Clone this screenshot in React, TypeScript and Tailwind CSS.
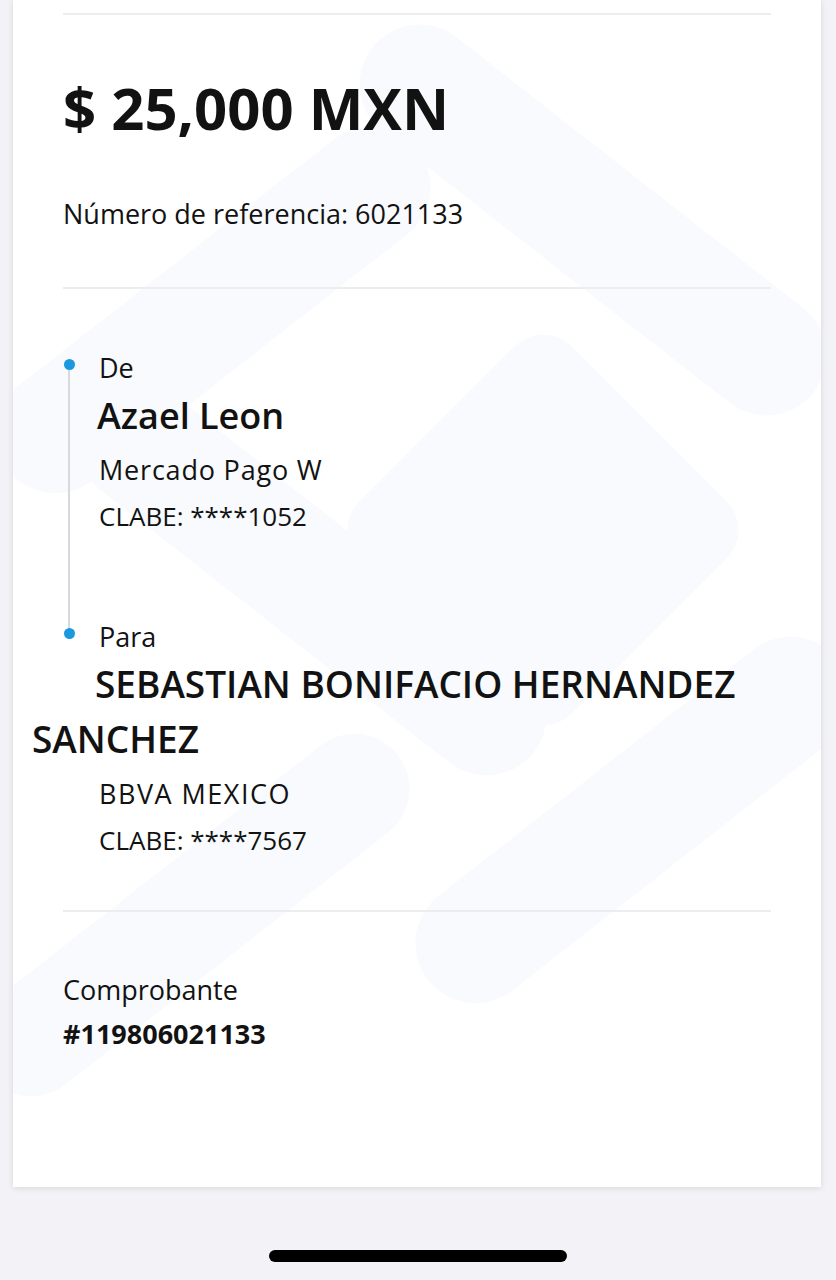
const font = { fontFamily: '"Open Sans", "Noto Sans", sans-serif' };

function Watermark() {
  // faint bank-logo pattern behind the receipt
  return (
    <svg
      className="absolute inset-0 h-full w-full"
      viewBox="0 0 808 1187"
      preserveAspectRatio="none"
      aria-hidden
    >
      <g fill="#f8fafd">
        <rect x="-60" y="250" width="520" height="120" rx="60" transform="rotate(-38 200 310)" />
        <rect x="300" y="160" width="560" height="120" rx="60" transform="rotate(38 580 220)" />
        <rect x="380" y="380" width="300" height="300" rx="40" transform="rotate(45 530 530)" />
        <rect x="20" y="520" width="560" height="120" rx="60" transform="rotate(38 300 580)" />
        <rect x="360" y="760" width="520" height="120" rx="60" transform="rotate(-38 620 820)" />
        <rect x="-80" y="860" width="520" height="110" rx="55" transform="rotate(-38 180 915)" />
      </g>
    </svg>
  );
}

export default function App() {
  return (
    <div className="flex h-[1280px] w-[836px] flex-col bg-[#f2f2f7] text-[#121212]" style={font}>
      {/* receipt card */}
      <div className="relative ml-[13px] mr-[15px] h-[1187px] overflow-hidden bg-white shadow-[0_1px_6px_rgba(0,0,0,0.12)]">
        <Watermark />
        <div className="relative flex flex-col px-[50px]">
          <div className="mt-[13px] h-[2px] bg-[#ededf0]" />

          <div className="mt-[64px] text-[58px] font-bold leading-[57px] whitespace-nowrap">$ 25,000 MXN</div>
          <div className="mt-[64px] text-[27px] leading-[27px]">Número de referencia: 6021133</div>

          <div className="mt-[60px] h-[2px] bg-[#ededf0]" />

          {/* de / para */}
          <div className="relative flex flex-col">
            <div className="absolute left-[5px] top-[75px] h-[269px] w-[2px] bg-[#d6d9df]" />
            <div className="absolute left-[0.5px] top-[69.5px] h-[11px] w-[11px] rounded-full bg-[#1b98e0]" />
            <div className="absolute left-[0.5px] top-[338.5px] h-[11px] w-[11px] rounded-full bg-[#1b98e0]" />

            <div className="ml-[36px] mt-[65px] text-[27px] leading-[27px]">De</div>
            <div className="ml-[34px] mt-[17px] text-[36px] font-semibold leading-[35px]">Azael Leon</div>
            <div className="ml-[36px] mt-[23px] text-[27px] leading-[27px] tracking-[0.8px]">Mercado Pago W</div>
            <div className="ml-[36px] mt-[20px] text-[26px] leading-[26px]">CLABE: ****1052</div>

            <div className="ml-[36px] mt-[94px] text-[27px] leading-[27px]">Para</div>
            <div className="-ml-[31px] mt-[6px] indent-[63px] text-[37px] font-semibold leading-[55px]">
              SEBASTIAN BONIFACIO HERNANDEZ SANCHEZ
            </div>
            <div className="ml-[36px] mt-[14px] text-[27px] leading-[27px] tracking-[1.5px]">BBVA MEXICO</div>
            <div className="ml-[36px] mt-[20px] text-[26px] leading-[26px]">CLABE: ****7567</div>
          </div>

          <div className="mt-[57px] h-[2px] bg-[#ededf0]" />

          <div className="mt-[64px] text-[27px] leading-[27px]">Comprobante</div>
          <div className="mt-[17px] text-[27px] font-bold leading-[27px]">#119806021133</div>
        </div>
      </div>

      {/* home indicator */}
      <div className="mx-auto mt-[63px] h-[12px] w-[298px] rounded-full bg-black" />
    </div>
  );
}
